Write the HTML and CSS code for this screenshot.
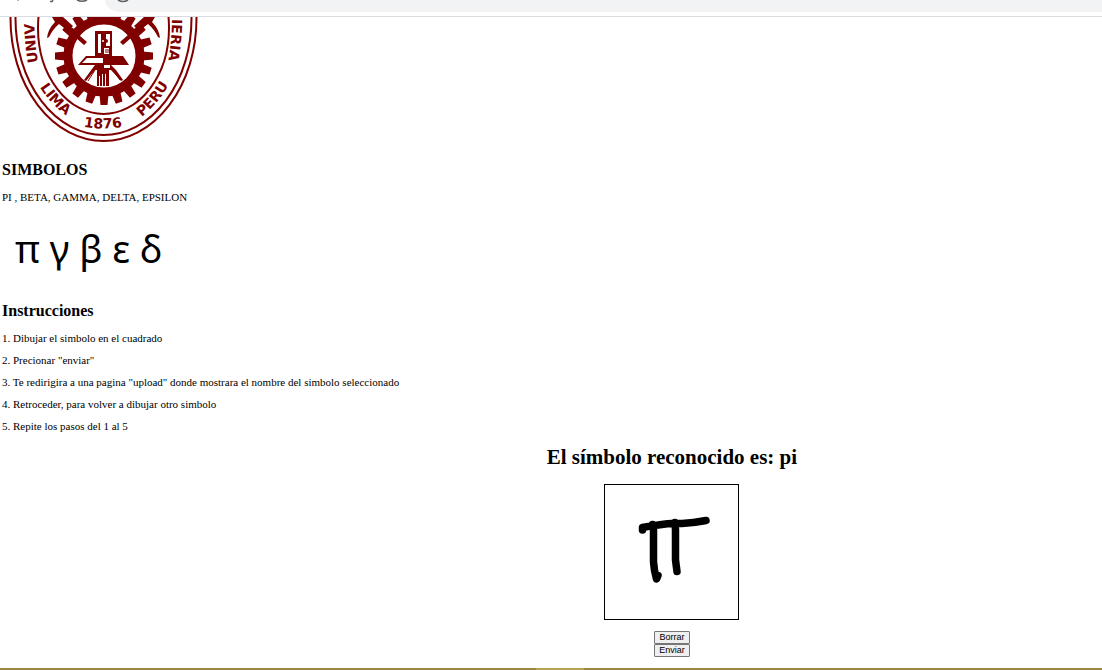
FILE: index.html
```html
<!DOCTYPE html>
<html lang="es">
<head>
<meta charset="utf-8">
<meta name="viewport" content="width=device-width, initial-scale=1">
<title>Símbolos</title>
<link rel="stylesheet" href="styles.css">
</head>
<body>
<header class="browser-bar">
  <svg class="browser-glyphs" width="140" height="4" viewBox="0 0 140 4" aria-hidden="true">
    <path d="M17 0h2v1h-2z" fill="#b4b7ba"/>
    <path d="M53 0l-1 1.500h-2M77 0q5 2.500 10 0M118 0q5 3 10 0" fill="none" stroke="#5f6368" stroke-width="1.500"/>
  </svg>
  <div class="address-pill"></div>
</header>
<main class="page">
  <svg class="seal" width="200" height="128" viewBox="0 17 200 128" role="img" aria-label="Escudo universitario">
    <defs>
      <path id="arc-left" d="M38 62Q34 40 34 0"/>
      <path id="arc-right" d="M172 19Q172 42 167 68"/>
      <path id="arc-lima" d="M36 80Q48 104 73 120"/>
      <path id="arc-year" d="M76 125Q103 132 130 125"/>
      <path id="arc-peru" d="M136 121Q158 106 172 79"/>
    </defs>
    <g fill="none" stroke="#800000" stroke-width="2">
      <ellipse cx="103.500" cy="18.500" rx="93" ry="122.500"/>
      <ellipse cx="103.500" cy="18.500" rx="88" ry="116.500"/>
      <ellipse cx="103.500" cy="28" rx="65.500" ry="86"/>
    </g>
    <circle cx="104" cy="56" r="36" fill="none" stroke="#800000" stroke-width="9"/>
    <g fill="#800000">
      <g id="teeth">
        <path id="tooth" d="M99.500 94L100.500 105H107.500L108.500 94Z"/>
        <use href="#tooth" transform="rotate(18 104 56)"/>
        <use href="#tooth" transform="rotate(36 104 56)"/>
        <use href="#tooth" transform="rotate(54 104 56)"/>
        <use href="#tooth" transform="rotate(72 104 56)"/>
      </g>
      <use href="#teeth" transform="rotate(90 104 56)"/>
      <use href="#teeth" transform="rotate(180 104 56)"/>
      <use href="#teeth" transform="rotate(270 104 56)"/>
      <path d="M52 17H63L73 26L68 31L59 24Q53 29 49 37L47 38Q48 29 55 22Z"/>
      <path d="M155 17H144L134 26L139 31L148 24Q154 29 158 37L160 38Q159 29 152 22Z"/>
      <path d="M76 38L79 35L87 42L84 45ZM131 38L128 35L120 42L123 45Z"/>
      <path d="M95 31H112V56H123L129 65H78L86 56H95Z"/>
      <path d="M95 65H111L116 70L123 80L121 81L111 70H109V86H106V74H105V86H103V74H102V86H100V76H99V86H97V70H95L86 81L84 80L92 69Z"/>
    </g>
    <g fill="#fff">
      <path d="M98 34H101V53H98ZM106 34H110V46H106ZM104 48H109V54H104ZM87 58H103V63H82ZM104 65H110V68H104Z"/>
      <circle cx="103" cy="41" r="1"/>
    </g>
    <circle cx="106" cy="41" r="2" fill="#800000"/>
    <path d="M105 50H109M105 52H109M95 70L88 81M113 70L120 80" stroke="#800000" stroke-width="1"/>
    <g class="seal-text">
      <text><textPath href="#arc-left">UNIV</textPath></text>
      <text><textPath href="#arc-right">IERIA</textPath></text>
      <text text-anchor="middle"><textPath href="#arc-lima" startOffset="50%">LIMA</textPath></text>
      <text text-anchor="middle"><textPath href="#arc-year" startOffset="50%">1876</textPath></text>
      <text text-anchor="middle"><textPath href="#arc-peru" startOffset="50%">PERU</textPath></text>
    </g>
  </svg>
  <h2>SIMBOLOS</h2>
  <p>PI , BETA, GAMMA, DELTA, EPSILON</p>
  <p class="greek">π γ β ε δ</p>
  <h2>Instrucciones</h2>
  <div class="steps">
    <p>1. Dibujar el simbolo en el cuadrado</p>
    <p>2. Precionar "enviar"</p>
    <p>3. Te redirigira a una pagina "upload" donde mostrara el nombre del simbolo seleccionado</p>
    <p>4. Retroceder, para volver a dibujar otro simbolo</p>
    <p>5. Repite los pasos del 1 al 5</p>
  </div>
  <section class="recognizer">
    <h1>El símbolo reconocido es: pi</h1>
    <div class="board">
      <svg width="133" height="134" viewBox="605 485 133 134" role="img" aria-label="pi dibujado" fill="none" stroke="#000" stroke-width="7.500" stroke-linecap="round" stroke-linejoin="round">
        <path d="M642.500 530V527.500Q650 526 658 525Q672 522.500 682 523.500Q693 523 706 520.500M652.500 524.500L653.500 530V562Q654 570 656.500 579L658 575.500M675 522.500L675.500 530V560L677 571.500"/>
      </svg>
    </div>
    <form class="actions">
      <button type="button">Borrar</button>
      <button type="button">Enviar</button>
    </form>
  </section>
</main>
<footer class="desktop-edge"></footer>
</body>
</html>
```
FILE: styles.css
```css
* { box-sizing: border-box; }

body {
  margin: 0;
  min-height: 100vh;
  display: flex;
  flex-direction: column;
  background: #fff;
  color: #000;
  font-family: "Liberation Serif", "Times New Roman", serif;
  font-size: 11px;
}

.browser-bar {
  display: flex;
  height: 17px;
  border-bottom: 1px solid #dadce0;
  position: relative;
}

.browser-glyphs {
  position: absolute;
  top: 0;
  left: 0;
}

.address-pill {
  flex: 1;
  height: 12px;
  margin-left: 105px;
  background: #f1f3f4;
  border-bottom-left-radius: 16px 12px;
}

.page {
  flex: 1;
  padding-left: 2px;
}

.seal {
  display: block;
  margin-left: -2px;
}

.seal-text {
  fill: #800000;
  font: bold 14px "DejaVu Sans", sans-serif;
}

h2 {
  margin: 16px 0 12px;
  font-size: 16px;
  line-height: 18px;
}

p {
  margin: 0;
  line-height: 12px;
}

.greek {
  margin: 16px 0 25px;
  padding-left: 13px;
  font-family: "Noto Sans", sans-serif;
  font-size: 38px;
  line-height: 58px;
}

.steps {
  display: grid;
  gap: 10px;
}

.recognizer {
  display: flex;
  flex-direction: column;
  align-items: center;
  padding-left: 21.8%;
}

h1 {
  margin: 13px 0 15px;
  font-size: 21px;
  line-height: 24px;
}

.board {
  border: 1px solid #000;
}

.board svg { display: block; }

.actions {
  display: flex;
  flex-direction: column;
  margin-top: 11px;
}

button {
  height: 13px;
  padding: 0 4px;
  border: 1px solid #767676;
  border-radius: 1px;
  background: #efefef;
  color: #000;
  font: 9px/11px "Liberation Sans", Arial, sans-serif;
}

.desktop-edge {
  height: 2px;
  background: linear-gradient(#b5a255, #b5a255) 536px 0 / 48px 2px no-repeat #9a8744;
}
```
